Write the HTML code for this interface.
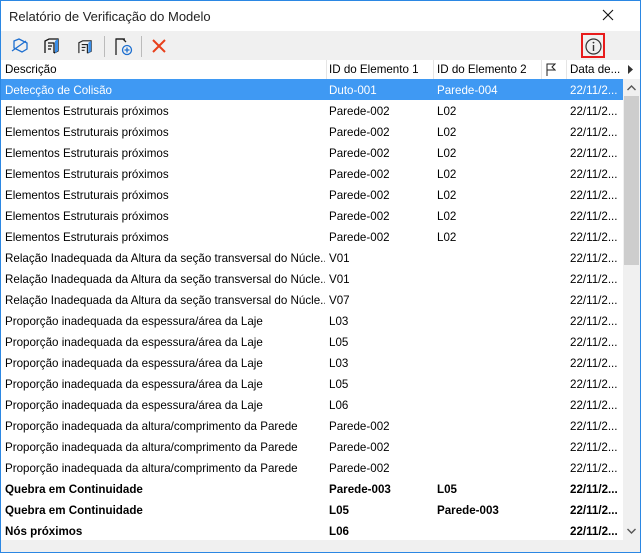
<!DOCTYPE html><html><head><meta charset="utf-8"><style>
*{margin:0;padding:0;box-sizing:border-box}
body{width:641px;height:553px;overflow:hidden;background:#fff;font-family:"Segoe UI","Liberation Sans",sans-serif;font-size:11.6px;color:#000;position:relative}
.win{position:absolute;inset:0;border:1px solid #2b87e3;}
.title{position:absolute;left:9px;top:9px;font-size:13px;color:#222}
.close{position:absolute;left:602px;top:9px}
.tb{position:absolute;left:1px;top:31px;width:639px;height:29px;background:#f0f0f0}
.sep{position:absolute;top:5px;width:1px;height:21px;background:#bbb}
.info{position:absolute;left:580px;top:2px;width:24px;height:25px;border:2px solid #e81c1c}
.hdr{position:absolute;left:1px;top:60px;width:622px;height:19px;background:#fff}
.hdr div,.row div{position:absolute;white-space:nowrap;overflow:hidden}
.hdr .s{top:0;width:1px;height:19px;background:#e5e5e5}
.row{position:absolute;left:1px;width:622px;height:21px}
.row div{top:5px}
.sel{background:#3f99f3;color:#fff}
.b{font-weight:bold}
.vs{position:absolute;left:623px;top:79px;width:17px;height:461px;background:#f0f0f0}
.thumb{position:absolute;left:1px;top:17px;width:15px;height:169px;background:#cdcdcd}
.bot{position:absolute;left:1px;top:540px;width:639px;height:12px;background:#f0f0f0}
</style></head><body>
<div class="title">Relatório de Verificação do Modelo</div>
<svg class="close" width="12" height="12" viewBox="0 0 12 12"><path d="M1 1L11 11M11 1L1 11" stroke="#111" stroke-width="1.1"/></svg>
<div class="tb">
<svg style="position:absolute;left:10px;top:6px" width="18" height="18" viewBox="0 0 18 18"><path d="M3 4l5-2 8 4v6l-5 3-8-4z" fill="none" stroke="#1d6fd0" stroke-width="1.3"/><path d="M1 14L15 4" stroke="#1d6fd0" stroke-width="1.3"/></svg>
<svg style="position:absolute;left:42px;top:6px" width="18" height="18" viewBox="0 0 18 18"><path d="M2 16V4l4-2h9v12l-4 2" fill="none" stroke="#111" stroke-width="1.3"/><path d="M5 6h6v10M5 9h4M5 12h3" fill="none" stroke="#111" stroke-width="1.3"/><path d="M12 4l3-2v12l-3 2z" fill="#3a8ee8"/></svg>
<svg style="position:absolute;left:76px;top:7px" width="17" height="17" viewBox="0 0 18 18"><path d="M2 16V5l4-2h9v11l-4 2" fill="none" stroke="#222" stroke-width="1.2"/><path d="M5 7h6v9M5 10h4M5 13h3" fill="none" stroke="#222" stroke-width="1.2"/><path d="M12 5l3-2v11l-3 2z" fill="#3a8ee8"/></svg>
<div class="sep" style="left:103px"></div>
<svg style="position:absolute;left:113px;top:5px" width="20" height="21" viewBox="0 0 20 21"><path d="M2 19V3h7l3 3" fill="none" stroke="#222" stroke-width="1.3"/><path d="M2 3h9" stroke="#222" stroke-width="1.3"/><circle cx="13" cy="14" r="4.5" fill="none" stroke="#1d6fd0" stroke-width="1.3"/><path d="M13 11.5v5M10.5 14h5" stroke="#1d6fd0" stroke-width="1.3"/></svg>
<div class="sep" style="left:140px"></div>
<svg style="position:absolute;left:151px;top:8px" width="14" height="14" viewBox="0 0 14 14"><path d="M1 1L13 13M13 1L1 13" stroke="#e8401c" stroke-width="2"/></svg>
<div class="info"><svg style="position:absolute;left:2px;top:3px" width="17" height="17" viewBox="0 0 17 17"><circle cx="8.5" cy="8.5" r="7.5" fill="none" stroke="#333" stroke-width="1.2"/><path d="M8.5 7v6" stroke="#333" stroke-width="1.4"/><circle cx="8.5" cy="4.6" r="0.9" fill="#333"/></svg></div>
</div>
<div class="hdr">
<div style="left:4px;top:3px">Descrição</div>
<div class="s" style="left:325px"></div>
<div style="left:328px;top:3px">ID do Elemento 1</div>
<div class="s" style="left:432px"></div>
<div style="left:436px;top:3px">ID do Elemento 2</div>
<div class="s" style="left:540px"></div>
<div style="left:545px;top:3px"><svg width="10" height="13" viewBox="0 0 10 13"><path d="M1 13V1h8l-3 3 3 3H1" fill="none" stroke="#222"/></svg></div>
<div class="s" style="left:565px"></div>
<div style="left:569px;top:3px">Data de...</div>
</div>
<svg style="position:absolute;left:628px;top:65px" width="6" height="9"><path d="M0 0l5 4.5L0 9z" fill="#333"/></svg>
<div id="rows"></div>
<div class="vs"><svg style="position:absolute;left:4px;top:6px" width="9" height="6"><path d="M0.5 5L4.5 1 8.5 5" fill="none" stroke="#555" stroke-width="1.4"/></svg><div class="thumb"></div><svg style="position:absolute;left:4px;top:449px" width="9" height="6"><path d="M0.5 1L4.5 5 8.5 1" fill="none" stroke="#555" stroke-width="1.4"/></svg></div>
<div class="bot"></div>
<div class="win"></div>
<script>
var d=[["Detecção de Colisão","Duto-001","Parede-004",0],
["Elementos Estruturais próximos","Parede-002","L02",0],
["Elementos Estruturais próximos","Parede-002","L02",0],
["Elementos Estruturais próximos","Parede-002","L02",0],
["Elementos Estruturais próximos","Parede-002","L02",0],
["Elementos Estruturais próximos","Parede-002","L02",0],
["Elementos Estruturais próximos","Parede-002","L02",0],
["Elementos Estruturais próximos","Parede-002","L02",0],
["Relação Inadequada da Altura da seção transversal do Núcle...","V01","",0],
["Relação Inadequada da Altura da seção transversal do Núcle...","V01","",0],
["Relação Inadequada da Altura da seção transversal do Núcle...","V07","",0],
["Proporção inadequada da espessura/área da Laje","L03","",0],
["Proporção inadequada da espessura/área da Laje","L05","",0],
["Proporção inadequada da espessura/área da Laje","L03","",0],
["Proporção inadequada da espessura/área da Laje","L05","",0],
["Proporção inadequada da espessura/área da Laje","L06","",0],
["Proporção inadequada da altura/comprimento da Parede","Parede-002","",0],
["Proporção inadequada da altura/comprimento da Parede","Parede-002","",0],
["Proporção inadequada da altura/comprimento da Parede","Parede-002","",0],
["Quebra em Continuidade","Parede-003","L05",1],
["Quebra em Continuidade","L05","Parede-003",1],
["Nós próximos","L06","",1]];
var h="";d.forEach(function(r,i){h+='<div class="row'+(i==0?' sel':'')+(r[3]?' b':'')+'" style="top:'+(79+i*21)+'px"><div style="left:4px;width:320px">'+r[0]+'</div><div style="left:328px">'+r[1]+'</div><div style="left:436px">'+r[2]+'</div><div style="left:569px">22/11/2...</div></div>'});
document.getElementById("rows").innerHTML=h;
</script>
</body></html>
